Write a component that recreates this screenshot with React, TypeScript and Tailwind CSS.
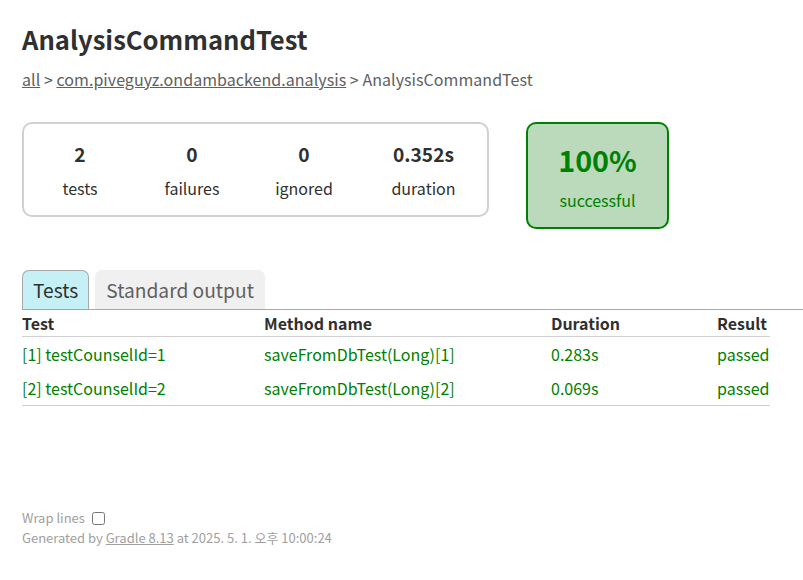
import React from "react";

const font = { fontFamily: '"Noto Sans CJK KR", "Noto Sans", sans-serif' };

const counters = [
  { value: "2", label: "tests", width: "w-[112px]" },
  { value: "0", label: "failures", width: "w-[112px]" },
  { value: "0", label: "ignored", width: "w-[112px]" },
  { value: "0.352s", label: "duration", width: "w-[127px]" },
];

const rows = [
  { test: "[1] testCounselId=1", method: "saveFromDbTest(Long)[1]", duration: "0.283s", result: "passed" },
  { test: "[2] testCounselId=2", method: "saveFromDbTest(Long)[2]", duration: "0.069s", result: "passed" },
];

export default function App() {
  return (
    <div className="min-h-[580px] bg-white pl-[22px] pt-[23px] text-[#303030]" style={font}>
      {/* Header */}
      <h1 className="text-[25.6px] font-bold leading-[32px] whitespace-nowrap">AnalysisCommandTest</h1>
      <div className="mt-[12px] text-[16px] leading-[24px] tracking-[0.05px] text-[#606060] whitespace-nowrap">
        <a className="underline">all</a> &gt; <a className="underline">com.piveguyz.ondambackend.analysis</a> &gt; AnalysisCommandTest
      </div>

      {/* Summary */}
      <div className="mt-[31px] flex items-start">
        <div className="flex rounded-[10px] border-2 border-[#d0d0d0]">
          {counters.map((c, i) => (
            <div key={i} className={`${c.width} pt-[16px] pb-[15px] text-center`}>
              <p className="mb-[9px] text-[19.2px] font-bold leading-[28px]">{c.value}</p>
              <p className="text-[16px] leading-[23px]">{c.label}</p>
            </div>
          ))}
        </div>
        <div className="ml-[37px] w-[143px] rounded-[10px] border-2 border-[#008000] bg-[#bbd9bb] pt-[16px] pb-[15px] text-center text-[#008000]">
          <p className="mb-[9px] text-[28.8px] font-bold leading-[40px]">100%</p>
          <p className="text-[16px] leading-[23px]">successful</p>
        </div>
      </div>

      {/* Tabs */}
      <div className="mt-[41px] flex border-b border-[#a8a8a8] text-[19.2px] leading-[28px]">
        <div className="mr-[6px] rounded-t-[7px] border border-b-0 border-[#a8a8a8] bg-[#c5f0f5] px-[10px] py-[5px] text-[#303030]">
          Tests
        </div>
        <div className="rounded-t-[7px] border border-b-0 border-[#f0f0f0] bg-[#f0f0f0] px-[10px] py-[5px] text-[#606060]">
          Standard output
        </div>
      </div>

      {/* Table */}
      <div className="w-[748px] text-[16px] leading-[24px] whitespace-nowrap">
        <div className="flex border-b border-[#d0d0d0] pt-[1px] pb-[1px] font-bold">
          <div className="w-[242px]">Test</div>
          <div className="w-[287px]">Method name</div>
          <div className="w-[166px]">Duration</div>
          <div className="w-[53px]">Result</div>
        </div>
        {rows.map((r, i) => (
          <div
            key={i}
            className={`flex py-[5px] text-[#008000] ${i === rows.length - 1 ? "border-b border-[#d0d0d0]" : ""}`}
          >
            <div className="w-[242px]">{r.test}</div>
            <div className="w-[287px]">{r.method}</div>
            <div className="w-[166px]">{r.duration}</div>
            <div className="w-[53px]">{r.result}</div>
          </div>
        ))}
      </div>

      {/* Footer */}
      <div className="mt-[102px] text-[13px] text-[#a0a0a0] whitespace-nowrap">
        <div className="flex h-[20px] items-center">
          <label>Wrap lines</label>
          <input type="checkbox" className="ml-[7px] h-[13px] w-[13px]" />
        </div>
        <div className="flex h-[20px] items-center">
          <span>
            Generated by <a className="underline">Gradle 8.13</a> at 2025. 5. 1. 오후 10:00:24
          </span>
        </div>
      </div>
    </div>
  );
}
